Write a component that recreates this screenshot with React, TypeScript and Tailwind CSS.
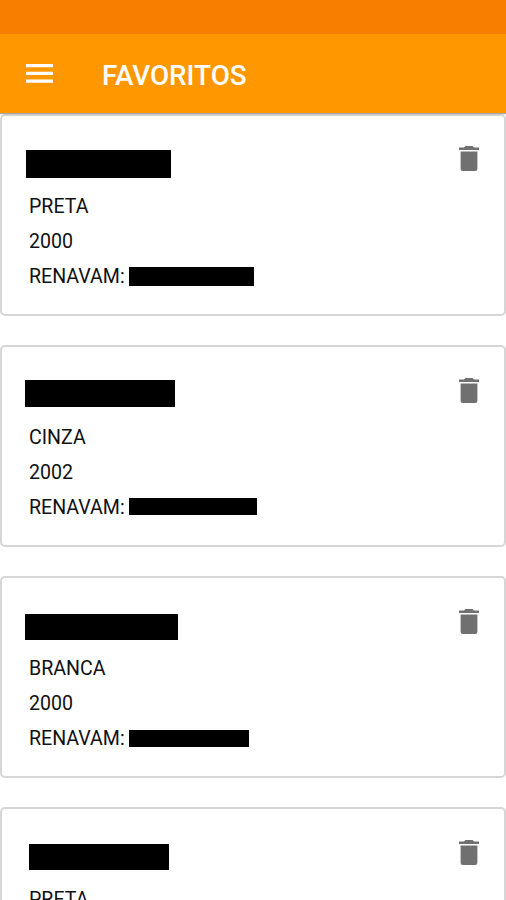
type Vehicle = {
  color: string;
  year: string;
  plateBar: string;
  renavamBar: string;
};

const vehicles: Vehicle[] = [
  { color: "PRETA", year: "2000", plateBar: "mt-[34px] ml-[24px] h-[28px] w-[145px]", renavamBar: "mt-0 h-[19px] w-[125px]" },
  { color: "CINZA", year: "2002", plateBar: "mt-[33px] ml-[23px] h-[27px] w-[150px]", renavamBar: "-mt-[2px] h-[17px] w-[128px]" },
  { color: "BRANCA", year: "2000", plateBar: "mt-[36px] ml-[23px] h-[26px] w-[153px]", renavamBar: "-mt-[1px] h-[17px] w-[120px]" },
  { color: "PRETA", year: "2000", plateBar: "mt-[35px] ml-[27px] h-[26px] w-[140px]", renavamBar: "mt-0 h-[18px] w-[124px]" },
];

function MenuIcon() {
  return (
    <svg className="block h-[19px] w-[27px]" viewBox="0 0 27 19" fill="white" aria-hidden="true">
      <path d="M0 0h27v3.2H0zM0 7.8h27v3.2H0zM0 15.6h27v3.2H0z" />
    </svg>
  );
}

function TrashIcon() {
  return (
    <svg className="block h-[26px] w-5" viewBox="0 0 20 26" fill="#707070" aria-hidden="true">
      <path d="M0 1.4h5L6.4 0h7.2L15 1.4h5v2.7H0z" />
      <path d="M1.6 5.6h16.8v17.2a2.2 2.2 0 0 1-2.2 2.2H3.8a2.2 2.2 0 0 1-2.2-2.2z" />
    </svg>
  );
}

function VehicleCard({ vehicle }: { vehicle: Vehicle }) {
  return (
    <article className="flex h-[202px] shrink-0 justify-between rounded-[5px] border-2 border-[#d6d6d6] bg-white">
      <div>
        <div className="flex h-[72.8px] items-start">
          <div className={`bg-black ${vehicle.plateBar}`} />
        </div>
        <div className="pl-[27px] text-[19.6px] leading-[35.2px] text-[#111]">
          <p>{vehicle.color}</p>
          <p>{vehicle.year}</p>
          <div className="flex items-center">
            <p className="w-[100px] whitespace-nowrap">RENAVAM:</p>
            <div className={`bg-black ${vehicle.renavamBar}`} />
          </div>
        </div>
      </div>
      <button className="mt-[30.5px] mr-[25px] h-[26px]" aria-label="Excluir">
        <TrashIcon />
      </button>
    </article>
  );
}

export default function App() {
  return (
    <div className="flex h-[900px] w-[506px] flex-col overflow-hidden bg-white font-[Roboto,sans-serif]">
      <div className="h-[34px] shrink-0 bg-[#f87e00]" />
      <header className="z-10 flex h-[79px] shrink-0 items-center bg-[#ff9800] pl-[26px] shadow-[0_1px_1px_rgba(0,0,0,0.35)]">
        <button aria-label="Menu">
          <MenuIcon />
        </button>
        <h1 className="ml-[49px] pt-[5px] text-[27.8px] leading-8 font-medium text-white">FAVORITOS</h1>
      </header>
      <main className="flex min-h-0 flex-1 flex-col gap-[29.2px] overflow-hidden pt-[0.9px]">
        {vehicles.map((vehicle, index) => (
          <VehicleCard key={index} vehicle={vehicle} />
        ))}
      </main>
    </div>
  );
}
